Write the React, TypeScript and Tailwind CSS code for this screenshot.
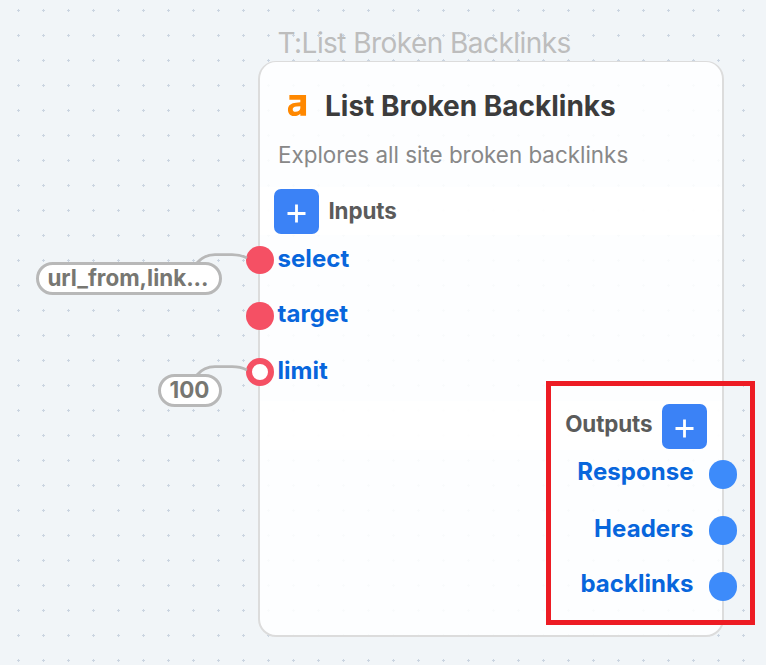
import type { ReactNode } from "react";

function DotGrid() {
  return (
    <svg className="absolute inset-0 h-full w-full" shapeRendering="crispEdges" aria-hidden="true">
      <defs>
        <pattern id="grid" width="25" height="25" x="6" y="-2" patternUnits="userSpaceOnUse">
          <path d="M12 11h1v3h-1zM11 12h3v1h-3z" fill="#cbd5e1" />
        </pattern>
      </defs>
      <rect width="100%" height="100%" fill="url(#grid)" />
    </svg>
  );
}

function AddButton() {
  return (
    <button className="flex h-[45px] w-[45px] shrink-0 items-center justify-center rounded-[7px] bg-[#3b82f6]" aria-label="Add">
      <svg width="45" height="45" viewBox="0 0 45 45" fill="none">
        <path d="M22.5 15.6v18M13.5 24.5h18" stroke="white" strokeWidth="2.8" />
      </svg>
    </button>
  );
}

function InputPort({ label, hollow = false, labelClass }: { label: string; hollow?: boolean; labelClass: string }) {
  return (
    <div className="flex h-14 items-center">
      <span className={`-ml-[14px] h-7 w-7 shrink-0 rounded-full ${hollow ? "border-[6px] border-[#f55064] bg-white" : "bg-[#f55064]"}`} />
      <span className={`ml-[3.5px] text-[24px] leading-7 font-bold tracking-[0.05px] text-[#0866dc] ${labelClass}`}>{label}</span>
    </div>
  );
}

function OutputPort({ label, labelClass }: { label: string; labelClass: string }) {
  return (
    <div className="flex h-14 items-center justify-end">
      <span className={`mr-[15px] text-[24px] leading-7 font-bold tracking-[0.05px] text-[#0866dc] ${labelClass}`}>{label}</span>
      <span className="-mr-[15px] h-[28.5px] w-[28.5px] shrink-0 rounded-full bg-[#3d8bfa]" />
    </div>
  );
}

function ValuePill({ className, children }: { className: string; children: ReactNode }) {
  return (
    <div className={`absolute flex h-[33px] items-center justify-center rounded-full border-[3px] border-[#b8b8b8] bg-white text-[22.4px] leading-none font-bold whitespace-nowrap text-[#777772] ${className}`}>
      {children}
    </div>
  );
}

export default function App() {
  return (
    <main className="relative h-[665px] w-[766px] overflow-hidden bg-[#f1f5f8] font-['Inter',sans-serif]">
      <DotGrid />
      <div className="absolute top-[26px] left-[277.5px] text-[28px] leading-[34px] tracking-[-0.55px] whitespace-nowrap text-[#bdbdbd]">T:List Broken Backlinks</div>

      <section className="absolute top-[61px] left-[258px] flex h-[575.5px] w-[466px] flex-col rounded-[18px] border-x-2 border-t border-b-2 border-[#dcdcdc] bg-[#feffff]/90">
        <header className="flex h-[89px] items-center pl-[27px]">
          <svg width="20" height="22" viewBox="0 0 21 23" className="mb-[2px]" preserveAspectRatio="none" aria-label="Ahrefs">
            <path fillRule="evenodd" fill="#ff8800" d="M2.5 0H20V21.7H14V19.5C12.2 21.2 9.7 22.3 7 22C3.4 21.6 1 19 1 15.3C1 10.4 4.5 8.4 9.5 8L14 7.6V5H2.5ZM14 11.7L10 12.1C7.2 12.4 6 13.3 6 15.1C6 16.7 7.1 17.6 8.9 17.6C11.9 17.6 14 16 14 13.7Z" />
          </svg>
          <h1 className="mb-[2px] ml-[18px] text-[28px] leading-8 font-bold tracking-normal whitespace-nowrap text-[#3c3c3c]">List Broken Backlinks</h1>
        </header>
        <p className="-mt-[1px] pl-[18px] text-[22.4px] leading-[10px] whitespace-nowrap text-[#888888]">Explores all site broken backlinks</p>
        <div className="mt-[27px] flex h-[48px] items-center bg-white/80 pt-[1px] pl-[14.4px]">
          <AddButton />
          <h2 className="mb-[1px] ml-[9px] text-[22.4px] leading-7 font-bold tracking-[-0.1px] text-[#5b5b5b]">Inputs</h2>
        </div>
        <div className="-mt-[3px]">
          <InputPort label="select" labelClass="mb-[2px]" />
          <InputPort label="target" labelClass="mb-[4px]" />
          <InputPort label="limit" hollow labelClass="mb-[2px]" />
        </div>
        <div className="mt-[1px] flex h-[49px] items-center justify-end bg-white/80 pt-[2px] pr-[15px]">
          <h2 className="mr-[9.5px] mb-[5px] text-[22.4px] leading-7 font-bold tracking-[-0.1px] text-[#5b5b5b]">Outputs</h2>
          <AddButton />
        </div>
        <div className="-mt-[3.5px]">
          <OutputPort label="Response" labelClass="mb-[6px]" />
          <OutputPort label="Headers" labelClass="mb-[4px]" />
          <OutputPort label="backlinks" labelClass="mb-[6px]" />
        </div>
      </section>

      <svg className="absolute inset-0" width="766" height="665" fill="none" stroke="#b8b8b8" strokeWidth="2.8" aria-hidden="true">
        <path d="M197 263C202 257 207 254.7 215 254.7H232C239 254.7 243 256 247 258" />
        <path d="M197 375C202 369 207 366.7 215 366.7H232C239 366.7 243 368 247 370" />
      </svg>
      <ValuePill className="top-[262px] left-[36px] w-[186px] pr-[2px]">url_from,link...</ValuePill>
      <ValuePill className="top-[374px] left-[158px] w-[64px] pr-[1px]">100</ValuePill>

      <div className="absolute top-[381px] left-[546px] h-[244px] w-[209px] border-[5px] border-[#ed1c24]" />
    </main>
  );
}
